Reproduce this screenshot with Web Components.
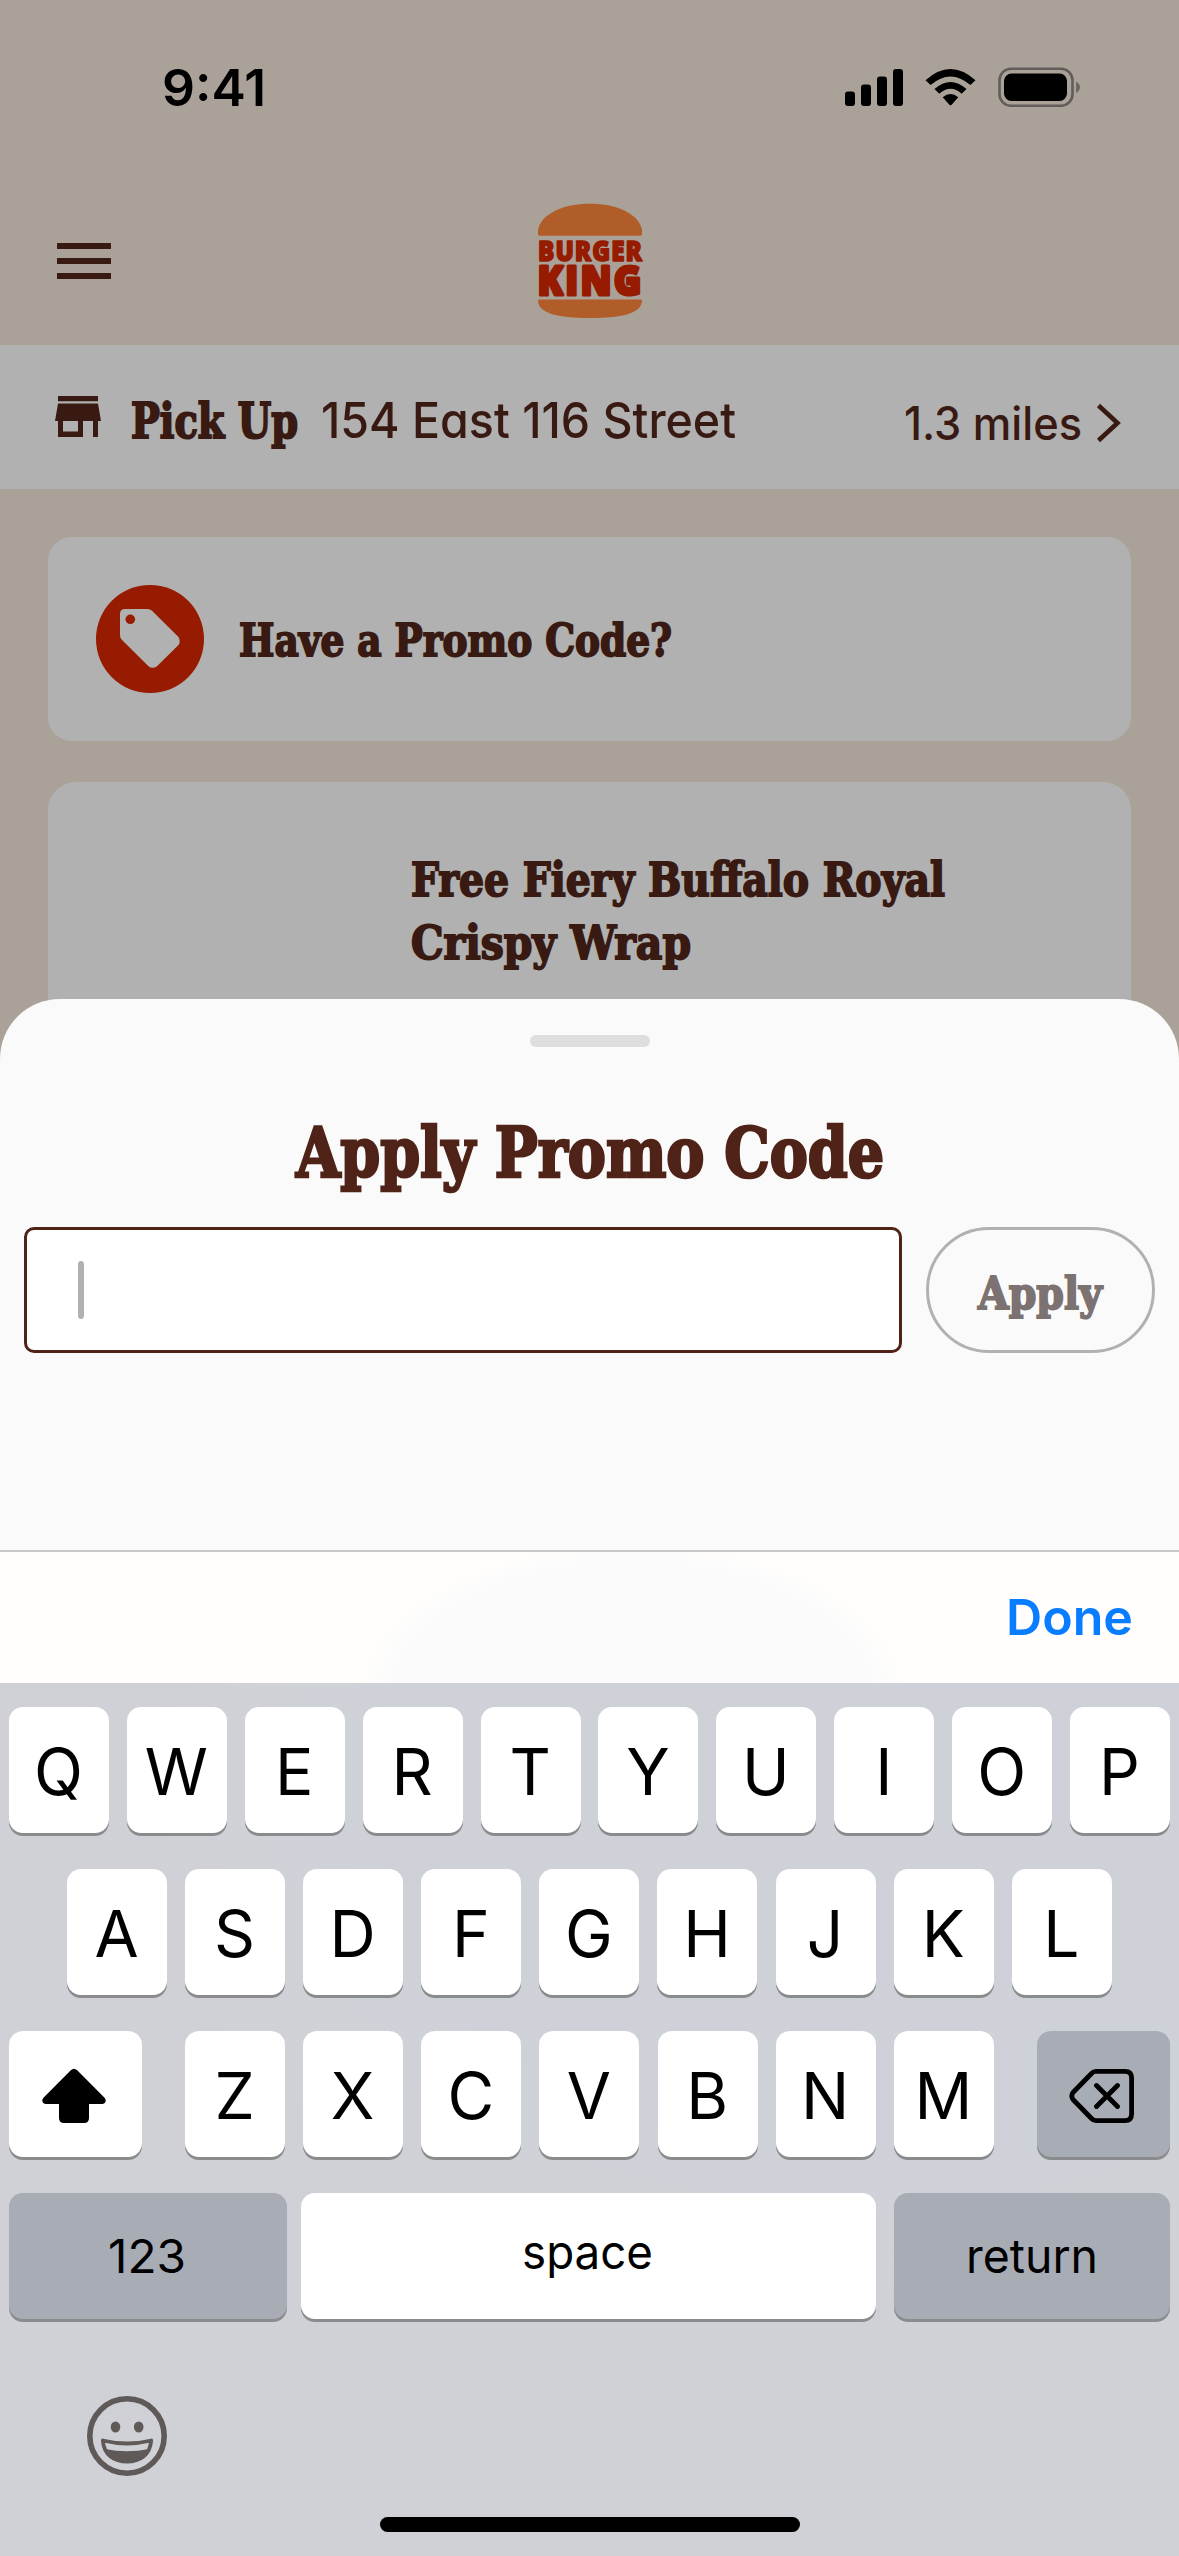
<!DOCTYPE html>
<html lang="en">
<head>
<meta charset="utf-8">
<title>Apply Promo Code</title>
<style>
html,body{margin:0;padding:0}
body{width:1179px;height:2556px;overflow:hidden;background:#aaa298;font-family:Inter,"Liberation Sans",sans-serif}
</style>
</head>
<body>
<promo-screen></promo-screen>
<script>
const define = (name, html, setup) => {
  const tpl = document.createElement('template');
  tpl.innerHTML = html;
  customElements.define(name, class extends HTMLElement {
    connectedCallback() {
      if (this.shadowRoot) return;
      this.attachShadow({mode: 'open'}).appendChild(tpl.content.cloneNode(true));
      if (setup) setup(this, this.shadowRoot);
    }
  });
};

define('promo-screen', `
<style>
:host{display:grid;width:1179px;height:2556px;overflow:hidden;background:#aaa298}
app-page,bottom-layer{grid-area:1/1}
bottom-layer{align-self:end}
</style>
<app-page></app-page>
<bottom-layer></bottom-layer>`);

define('app-page', `
<style>
:host{display:flex;flex-direction:column;color:#381a12;height:1100px;overflow:hidden}
main{display:flex;flex-direction:column;gap:41px;padding:48px 48px 0}
</style>
<status-bar></status-bar>
<app-header></app-header>
<store-bar></store-bar>
<main><promo-card></promo-card><offer-card></offer-card></main>`);

define('status-bar', `
<style>
:host{display:flex;flex:none;box-sizing:border-box;height:176px;padding:63px 99px 0 162px;justify-content:space-between;color:#000}
.t{font-size:51px;font-weight:600;line-height:50px}
svg{display:block;margin-top:3px}
</style>
<div class="t"><fit-text w="104">9:41</fit-text></div>
<svg width="236" height="44" viewBox="0 0 236 44">
 <rect x="1" y="25.500" width="10" height="14.500" rx="3"/><rect x="17" y="18.500" width="10" height="21.500" rx="3"/><rect x="33" y="10.500" width="10" height="29.500" rx="3"/><rect x="49" y="3" width="10" height="37" rx="3"/>
 <path d="M81.500 14.200Q94 2.900 106.500 2.900Q119 2.900 131.500 14.200L126.400 19.100Q106.500 1.900 86.600 19.100Z"/>
 <path d="M90.500 23Q106.500 8.800 122.500 23L117.700 27.700Q106.500 17.700 95.300 27.700Z"/>
 <path d="M98.700 31.200Q106.500 25 114.300 31.200L107.600 38.700Q106.500 40 105.400 38.700Z"/>
 <rect x="155.500" y="2.700" width="73" height="37" rx="11.500" fill="none" stroke="#625c5a" stroke-width="2.600"/>
 <rect x="160" y="7.500" width="63" height="27.500" rx="7.500"/>
 <path d="M232 15.500Q236 18 236 21.300Q236 24.500 232 27Z" fill="#6b6563"/>
</svg>`);

define('app-header', `
<style>
:host{display:grid;flex:none;grid-template-columns:1fr auto 1fr;height:169px;box-sizing:border-box;padding:25px 57px 0;align-items:start}
.m{display:flex;flex-direction:column;gap:9px;width:54px;margin-top:42px}
.m i{height:6px;background:#381a12}
svg{display:block;overflow:visible}
</style>
<div class="m"><i></i><i></i><i></i></div>
<svg width="108" height="122" viewBox="0 0 108 122">
 <g fill="#b05d29">
  <path d="M2 33V29C5 13 27 2.800 54 2.800S103 13 106 29V33Q106 34.800 104.500 34.800H3.500Q2 34.800 2 33Z"/>
  <path d="M2 99.500Q2 98.500 3.500 98.500H104.500Q106 98.500 106 99.500C106 112 87 117 54 117S2 112 2 99.500Z"/>
 </g>
 <g fill="#961b00" stroke="#961b00" stroke-linejoin="round" font-family="Open Sans" font-weight="800">
  <text x="2" y="60" font-size="28" stroke-width="1.600" letter-spacing="1.200" textLength="105" lengthAdjust="spacingAndGlyphs">BURGER</text>
  <text x="1.500" y="94" font-size="41" stroke-width="3" letter-spacing="2.400" textLength="106" lengthAdjust="spacingAndGlyphs">KING</text>
 </g>
</svg>`);

define('store-bar', `
<style>
:host{display:flex;flex:none;height:144px;background:#b1b1b1;align-items:center;padding:0 58px 0 55px}
.shop{margin:0 30px 0 0}
.b{font:bold 49px/60px "DejaVu Serif Condensed","DejaVu Serif",serif;font-stretch:condensed;margin:7px 23px 0 0;-webkit-text-stroke:2px currentColor}
.a{font:450 50px/60px Inter,sans-serif;font-feature-settings:"cv11";margin-top:6px}
.d{font:450 46px/60px Inter,sans-serif;margin:12px 14px 0 auto}
.c{margin-top:11px}
svg{display:block}
</style>
<svg class="shop" width="46" height="42" viewBox="0 0 46 42" fill="#381a12"><path d="M3 0H43V5.300H3ZM3 7.500H43L46 25H43V41H38V25H28V41H3V25H0ZM8 25V35.500H23V25Z"/></svg>
<div class="b"><fit-text w="167">Pick Up</fit-text></div>
<div class="a"><fit-text w="415">154 East 116 Street</fit-text></div>
<div class="d"><fit-text w="178">1.3 miles</fit-text></div>
<svg class="c" width="25" height="40" viewBox="0 0 25 40"><path d="M2.500 2.500L21.500 20L2.500 37.500" fill="none" stroke="#381a12" stroke-width="4.600"/></svg>`);

define('promo-card', `
<style>
:host{display:flex;box-sizing:border-box;height:204px;background:#b1b1b1;border-radius:24px;align-items:center;padding-left:48px;gap:35px}
svg{display:block}
div{font:bold 45px/60px "DejaVu Serif Condensed","DejaVu Serif",serif;font-stretch:condensed;padding-top:4px;-webkit-text-stroke:1.800px currentColor}
</style>
<svg width="108" height="108" viewBox="0 0 108 108"><circle cx="54" cy="54" r="54" fill="#961b00"/><path fill="#b1b1b1" d="M29 24H51.500Q54 24 56 25.700L82.500 52Q85 56.500 82.500 60L61 81.200Q56.500 84.500 52.500 81.200L26 55Q24 53.300 24 50.500V29Q24 24 29 24Z"/><circle cx="34.300" cy="34.300" r="4.800" fill="#961b00"/></svg>
<div><fit-text w="433">Have a Promo Code?</fit-text></div>`);

define('offer-card', `
<style>
:host{display:flex;flex-direction:column;box-sizing:border-box;height:360px;background:#b1b1b1;border-radius:28px;padding:66px 0 0 363px;font:bold 47px/63px "DejaVu Serif Condensed","DejaVu Serif",serif;font-stretch:condensed;-webkit-text-stroke:1.800px currentColor}
</style>
<fit-text w="534">Free Fiery Buffalo Royal</fit-text>
<fit-text w="280">Crispy Wrap</fit-text>`);

define('bottom-layer', `
<style>:host{display:flex;flex-direction:column}</style>
<promo-sheet></promo-sheet><key-board></key-board>`);

define('promo-sheet', `
<style>
:host{display:flex;flex-direction:column;align-items:center;box-sizing:border-box;height:551px;background:#fafafa;border-radius:60px 60px 0 0;padding:36px 24px 0;color:#4f2317}
.h{width:120px;height:12px;border-radius:6px;background:#dedede}
h2{margin:65px 0 0;font:bold 69px/82px "DejaVu Serif Condensed","DejaVu Serif",serif;font-stretch:condensed;-webkit-text-stroke:2.600px currentColor}
.r{display:flex;align-self:stretch;gap:24px;margin-top:33px}
.f{display:flex;align-items:center;box-sizing:border-box;width:878px;height:126px;border:3px solid #4f2317;border-radius:10px;background:#fff;padding-left:51px}
.f i{width:6px;height:58px;border-radius:3px;background:#b1b1b1}
.b{display:flex;box-sizing:border-box;width:229px;height:126px;border:3px solid #b1b1b2;border-radius:63px;align-items:center;justify-content:center;padding:7px 2px 0 0;color:#7b7271;font:bold 45px/60px "DejaVu Serif Condensed","DejaVu Serif",serif;font-stretch:condensed;-webkit-text-stroke:1.800px currentColor}
</style>
<div class="h"></div>
<h2><fit-text w="588">Apply Promo Code</fit-text></h2>
<div class="r"><div class="f"><i></i></div><div class="b"><fit-text w="124">Apply</fit-text></div></div>`);

define('key-board', `
<style>
:host{display:block;height:1006px}
.bar{display:flex;box-sizing:border-box;height:133px;border-top:2px solid #c8c8cc;justify-content:flex-end;align-items:center;padding:0 46px 2px 0;color:#087dff;font-size:50px;font-weight:600;line-height:60px;
 background:radial-gradient(ellipse 275px 155px at 632px 145px,#fafafb 84%,#fffefc 100%)}
.keys{display:flex;flex-direction:column;gap:36px;box-sizing:border-box;height:873px;padding:24px 9px 0;
 background:radial-gradient(ellipse 720px 480px at 860px 130px,#ced2d8 70%,#d0d1d6 100%)}
.row{display:flex;gap:17.900px;height:126px;flex:none;justify-content:flex-start}
.two{padding-left:58px;gap:18.100px}
.three{gap:43px}
.mid{display:flex;gap:18.150px}
.four{gap:0}
.foot{display:flex;flex-direction:column;gap:41px;padding:41px 0 0 69px}
.home{width:420px;height:15px;border-radius:8px;background:#000;margin-left:302px}
svg{display:block}
</style>
<div class="bar"><fit-text w="127">Done</fit-text></div>
<div class="keys">
 <div class="row" data-k="QWERTYUIOP"></div>
 <div class="row two" data-k="ASDFGHJKL"></div>
 <div class="row three">
  <key-cap style="--w:133px;--r:3px"><svg width="64" height="56" viewBox="0 0 64 56"><path d="M28.800 2.200Q32 -0.800 35.200 2.200L62.300 29.500C65 32.500 63.500 36 60 36H47V50Q47 55 42 55H22Q17 55 17 50V36H4C0.500 36 -1 32.500 1.700 29.500Z"/></svg></key-cap>
  <div class="mid" data-k="ZXCVBNM"></div>
  <key-cap style="--w:133px;--bg:#a8acb5;--r:3px"><svg width="66" height="56" viewBox="0 0 66 56" fill="none" stroke="#000" stroke-width="4.800" stroke-linecap="round" stroke-linejoin="round"><path d="M27 3.400H56Q62.600 3.400 62.600 10V46Q62.600 52.600 56 52.600H27Q24.500 52.600 22.500 50.500L4 31.500Q1.500 28 4 24.500L22.500 5.500Q24.500 3.400 27 3.400ZM27.500 17.500L48.500 38.500M48.500 17.500L27.500 38.500"/></svg></key-cap>
 </div>
 <div class="row four">
  <key-cap style="--w:278px;--bg:#a8acb5;--fs:47px;--y:0px;--r:2px"><fit-text w="78">123</fit-text></key-cap>
  <key-cap style="--w:575px;--fs:47px;--y:-8px;--r:2px;margin-left:14px"><fit-text w="131">space</fit-text></key-cap>
  <key-cap style="--w:276px;--bg:#a8acb5;--fs:47px;--y:0px;margin-left:18px"><fit-text w="132">return</fit-text></key-cap>
 </div>
 <div class="foot">
  <svg width="98" height="80" viewBox="0 0 98 80"><g fill="none" stroke="#5f5958"><circle cx="49" cy="40" r="37.200" stroke-width="5.600"/><path d="M24.800 44.500Q49 50.500 73.200 44.500C72 59 62 65.500 49 65.500S26 59 24.800 44.500Z" stroke-width="3.800" stroke-linejoin="round"/></g><path fill="#5f5958" d="M27 53Q49 57.500 71 53C68 62 60 66 49 66S30 62 27 53Z"/><ellipse cx="37.500" cy="31" rx="4.800" ry="5.500" fill="#5f5958"/><ellipse cx="60.700" cy="31" rx="4.800" ry="5.500" fill="#5f5958"/></svg>
  <div class="home"></div>
 </div>
</div>`, (el, root) => {
  root.querySelectorAll('[data-k]').forEach(r => {
    for (const c of r.dataset.k) {
      const k = document.createElement('key-cap');
      k.textContent = c;
      r.appendChild(k);
    }
  });
});

define('key-cap', `
<style>
:host{display:flex;box-sizing:border-box;flex:none;width:var(--w,100px);height:126px;align-items:center;justify-content:center;border-radius:14px;background:var(--bg,#fff);box-shadow:0 3px 0 #898b8c;color:#000;font-size:var(--fs,64px);line-height:80px;padding-top:max(0px,var(--y,3px));padding-right:var(--r,1px)}
div{margin-top:min(0px,var(--y,0px))}
</style>
<div><slot></slot></div>`);

/* Squeezes or stretches one line of text to the width given in its "w" attribute. */
define('fit-text', `
<style>:host{display:block}span{display:inline-block;white-space:nowrap;transform-origin:0 50%}</style>
<span><slot></slot></span>`, (el, root) => {
  const w = +el.getAttribute('w');
  const s = root.querySelector('span');
  const natural = s.getBoundingClientRect().width;
  el.style.width = w + 'px';
  s.style.transform = 'scaleX(' + w / natural + ')';
});
</script>
</body>
</html>
